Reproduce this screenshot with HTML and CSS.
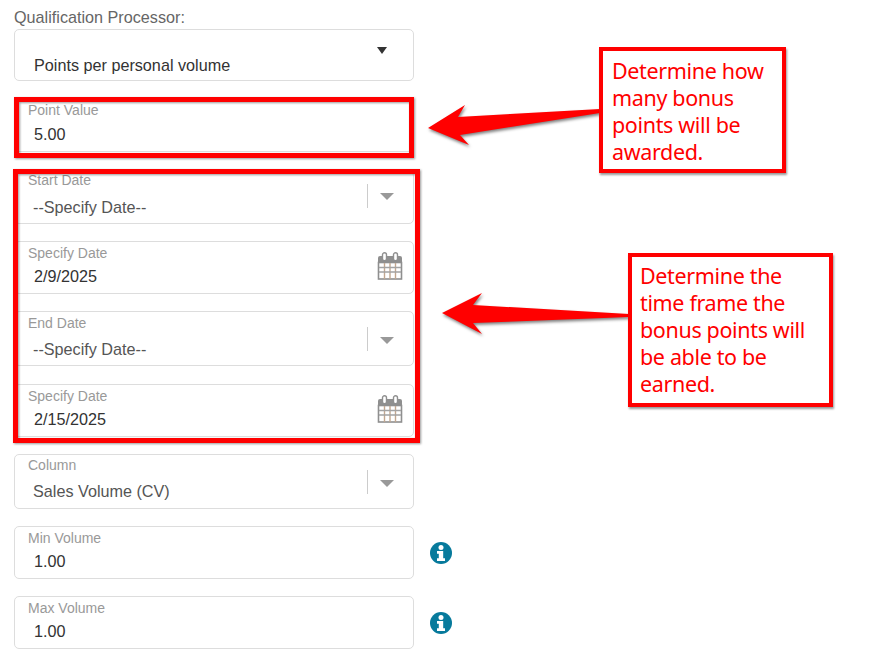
FILE: index.html
```html
<!DOCTYPE html>
<html lang="en">
<head>
    <meta charset="UTF-8">
    <title>Qualification Settings</title>
    <link rel="stylesheet" href="styles.css">
</head>
<body>
    <div class="page">
        <form class="form">
            <div class="form-title">Qualification Processor:</div>
            <div class="field field-plain">
                <span class="plain-caret"></span>
                <div class="value">Points per personal volume</div>
            </div>

            <div class="field field-point">
                <div class="label">Point Value</div>
                <div class="value">5.00</div>
            </div>

            <div class="field field-select field-start">
                <div class="label">Start Date</div>
                <div class="value">--Specify Date--</div>
                <span class="select-arrow"></span>
            </div>

            <div class="field">
                <div class="label">Specify Date</div>
                <div class="value">2/9/2025</div>
                <svg class="calendar" viewBox="0 0 26 28"><use href="#cal"></use></svg>
            </div>

            <div class="field field-select field-tall field-end">
                <div class="label">End Date</div>
                <div class="value">--Specify Date--</div>
                <span class="select-arrow"></span>
            </div>

            <div class="field">
                <div class="label">Specify Date</div>
                <div class="value">2/15/2025</div>
                <svg class="calendar" viewBox="0 0 26 28"><use href="#cal"></use></svg>
            </div>

            <div class="field field-select field-tall field-column">
                <div class="label">Column</div>
                <div class="value">Sales Volume (CV)</div>
                <span class="select-arrow"></span>
            </div>

            <div class="field-row">
                <div class="field">
                    <div class="label">Min Volume</div>
                    <div class="value">1.00</div>
                </div>
                <svg class="info" viewBox="0 0 22 22"><use href="#info"></use></svg>
            </div>

            <div class="field-row">
                <div class="field">
                    <div class="label">Max Volume</div>
                    <div class="value">1.00</div>
                </div>
                <svg class="info" viewBox="0 0 22 22"><use href="#info"></use></svg>
            </div>
        </form>

        <div class="highlight highlight-point"></div>
        <div class="highlight highlight-dates"></div>

        <svg class="arrows" width="880" height="656" viewBox="0 0 880 656">
            <polygon points="428,128 465,105 458,117 600,109 600,113 460,135 469,145"></polygon>
            <polygon points="442,313 482,293 473,305 629,314 629,317 473,323 482,334"></polygon>
        </svg>

        <div class="callout callout-points">Determine how many bonus points will be awarded.</div>
        <div class="callout callout-time">Determine the time frame the bonus points will be able to be earned.</div>
    </div>

    <svg class="defs" width="0" height="0">
        <symbol id="cal" viewBox="0 0 26 28">
            <path d="M1 6a2 2 0 0 1 2-2h20a2 2 0 0 1 2 2v5H1z" fill="#8f8f8f"/>
            <rect x="5.5" y="0.8" width="4" height="8" rx="2" fill="#fff" stroke="#8f8f8f" stroke-width="1.4"/>
            <rect x="16.5" y="0.8" width="4" height="8" rx="2" fill="#fff" stroke="#8f8f8f" stroke-width="1.4"/>
            <rect x="1.5" y="10.5" width="23" height="16.5" fill="#fff" stroke="#8f8f8f" stroke-width="1.6"/>
            <path d="M7.5 11v16M13 11v16M18.5 11v16" stroke="#c2a78f" stroke-width="1.4" fill="none"/>
            <path d="M2 15.5h22M2 20h22" stroke="#a3a3a3" stroke-width="1.4" fill="none"/>
        </symbol>
        <symbol id="info" viewBox="0 0 22 22">
            <circle cx="11" cy="11" r="11" fill="#077a9c"/>
            <circle cx="11" cy="5.4" r="2.5" fill="#fff"/>
            <path d="M7 9h6.2v7.2H15v2.8H7v-2.8h1.8v-4.4H7z" fill="#fff"/>
        </symbol>
    </svg>
</body>
</html>
```

FILE: styles.css
```css
html, body {
    margin: 0;
    background: #fff;
}
body {
    font-family: "Liberation Sans", Arial, sans-serif;
    overflow: hidden;
}
.page {
    position: relative;
    width: 880px;
    height: 656px;
    overflow: hidden;
}
.form {
    display: flex;
    flex-direction: column;
    width: 400px;
    padding: 5px 0 0 14px;
}
.form-title {
    font-size: 16.2px;
    line-height: 24px;
    color: #666;
}
.field {
    position: relative;
    box-sizing: border-box;
    width: 400px;
    height: 53px;
    margin-bottom: 17px;
    padding: 3px 0 0 13px;
    border: 1px solid #ddd;
    border-radius: 5px;
    background: #fff;
    flex: none;
}
.label {
    font-size: 14px;
    line-height: 16px;
    color: #999;
}
.value {
    margin-top: 5px;
    padding-left: 6px;
    font-size: 16.2px;
    line-height: 20px;
    color: #333;
}
.field-plain {
    height: 52px;
    margin-bottom: 18px;
    padding-top: 25px;
}
.field-plain .value {
    margin-top: 0;
}
.field-point {
    margin-bottom: 19px;
    padding-top: 2px;
}
.field-point .value {
    margin-top: 6px;
}
.field-select .value {
    margin-top: 8px;
    padding-left: 5px;
    color: #555;
}
.field-start .label {
    margin-top: -3px;
}
.field-start .value {
    margin-top: 9px;
}
.field-tall {
    height: 55px;
}
.field-end {
    margin-bottom: 18px;
}
.field-column {
    padding-top: 2px;
}
.plain-caret {
    position: absolute;
    top: 17px;
    right: 26px;
    border-style: solid;
    border-width: 7px 5.5px 0;
    border-color: #333 transparent transparent;
}
.select-arrow {
    position: absolute;
    top: 15px;
    right: 45px;
    height: 24px;
    border-left: 1px solid #ccc;
}
.select-arrow::after {
    content: "";
    position: absolute;
    top: 10px;
    left: 12px;
    border-style: solid;
    border-width: 7px 7px 0;
    border-color: #999 transparent transparent;
}
.field-start .select-arrow {
    top: 12px;
}
.field-start .select-arrow::after {
    top: 9px;
}
.calendar {
    position: absolute;
    top: 10px;
    right: 10px;
    width: 26px;
    height: 28px;
}
.field-row {
    display: flex;
    align-items: flex-start;
    gap: 16px;
}
.info {
    width: 22px;
    height: 22px;
    margin-top: 16px;
    flex: none;
}
.highlight {
    position: absolute;
    box-sizing: border-box;
    border: 5px solid #f00;
    filter: drop-shadow(1px 1px 1px rgba(0, 0, 0, 0.4));
}
.highlight-point {
    left: 14px;
    top: 97px;
    width: 400px;
    height: 61px;
}
.highlight-dates {
    left: 13px;
    top: 169px;
    width: 407px;
    height: 274px;
}
.arrows {
    position: absolute;
    left: 0;
    top: 0;
    fill: #f00;
    filter: drop-shadow(1px 2px 1.5px rgba(0, 0, 0, 0.5));
}
.callout {
    position: absolute;
    box-sizing: border-box;
    border: 4px solid #f00;
    background: #fff;
    box-shadow: 1px 2px 2px rgba(0, 0, 0, 0.4);
    font-family: "Noto Sans", sans-serif;
    font-size: 21.5px;
    letter-spacing: -0.35px;
    line-height: 27px;
    color: #f00;
}
.callout-points {
    left: 599px;
    top: 47px;
    width: 187px;
    height: 126px;
    padding: 6px 8px 0 9px;
}
.callout-time {
    left: 628px;
    top: 253px;
    width: 205px;
    height: 154px;
    padding: 5px 8px 0 8px;
}
.defs {
    position: absolute;
}
```
